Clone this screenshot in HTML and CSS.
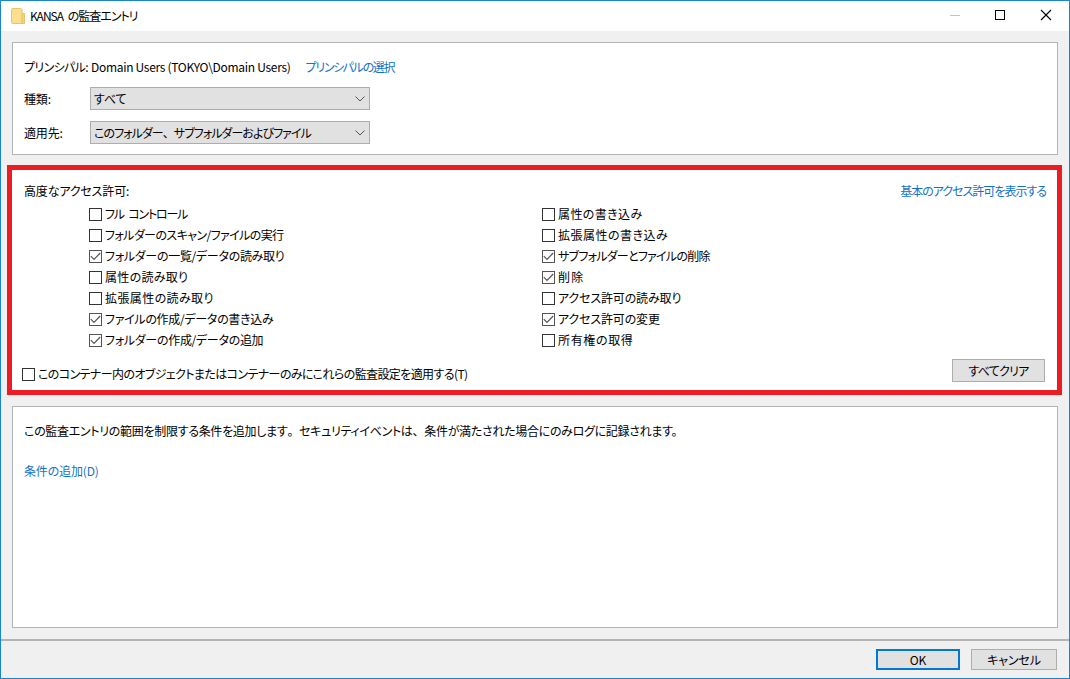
FILE: index.html
```html
<!DOCTYPE html>
<html lang="ja">
<head>
<meta charset="utf-8">
<title>KANSA の監査エントリ</title>
<link rel="stylesheet" href="styles.css">
</head>
<body>
<div class="window">
  <header class="titlebar">
    <svg class="folder" width="14" height="16" viewBox="0 0 14 16"><path d="M0.5 1.5 Q0.5 0.5 1.5 0.5 H9.5 Q11 0.5 11 2 V15.5 H1.5 Q0.5 15.5 0.5 14.5 Z" fill="#fbdf8c" stroke="#e8c468"/><path d="M11 5.5 H13.5 V15.5 H11 Z" fill="#f7d477" stroke="#e8c468"/></svg>
    <span class="title">KANSA の監査エントリ</span>
    <div class="controls">
      <svg width="46" height="30" viewBox="0 0 46 30"><path d="M19 14.5 H29" stroke="#c4c4c4"/></svg>
      <svg width="46" height="30" viewBox="0 0 46 30"><rect x="18.5" y="9.5" width="9" height="9" fill="none" stroke="#000"/></svg>
      <svg width="46" height="30" viewBox="0 0 46 30"><path d="M18 9 L28 19 M28 9 L18 19" stroke="#000" stroke-width="1.1" fill="none"/></svg>
    </div>
  </header>
  <main class="content">
    <section class="panel top">
      <div class="row principal"><span class="ls-60">プリンシパル:</span><span class="ls-30 name">Domain Users (TOKYO\Domain Users)</span><a class="link ls-130">プリンシパルの選択</a></div>
      <div class="row field"><label class="flabel">種類:</label><div class="select">すべて<svg class="chev" width="10" height="6" viewBox="0 0 10 6"><path d="M0.5 0.5 L5 5 L9.5 0.5" fill="none" stroke="#555"/></svg></div></div>
      <div class="row field"><label class="flabel">適用先:</label><div class="select"><span class="ls-95">このフォルダー<span class="fw">、</span>サブフォルダーおよびファイル</span><svg class="chev" width="10" height="6" viewBox="0 0 10 6"><path d="M0.5 0.5 L5 5 L9.5 0.5" fill="none" stroke="#555"/></svg></div></div>
    </section>
    <section class="redbox">
      <div class="panel perms">
        <div class="permhead"><span>高度なアクセス許可:</span><a class="link ls-100 basic">基本のアクセス許可を表示する</a></div>
        <div class="grid">
          <div class="col">
            <div class="check"><i class="box"></i><span class="full">フル コントロール</span></div>
            <div class="check"><i class="box"></i><span class="ls-60">フォルダーのスキャン/ファイルの実行</span></div>
            <div class="check"><i class="box on"><svg width="11" height="9" viewBox="0 0 11 9"><path d="M0.8 4.2 L4 7.4 L10.2 1" fill="none" stroke="#555" stroke-width="1.2"/></svg></i><span class="ls-30">フォルダーの一覧/データの読み取り</span></div>
            <div class="check"><i class="box"></i><span class="lsp-30">属性の読み取り</span></div>
            <div class="check"><i class="box"></i><span class="lsp-40">拡張属性の読み取り</span></div>
            <div class="check"><i class="box on"><svg width="11" height="9" viewBox="0 0 11 9"><path d="M0.8 4.2 L4 7.4 L10.2 1" fill="none" stroke="#555" stroke-width="1.2"/></svg></i><span class="ls-30">ファイルの作成/データの書き込み</span></div>
            <div class="check"><i class="box on"><svg width="11" height="9" viewBox="0 0 11 9"><path d="M0.8 4.2 L4 7.4 L10.2 1" fill="none" stroke="#555" stroke-width="1.2"/></svg></i><span class="ls-30">フォルダーの作成/データの追加</span></div>
          </div>
          <div class="col">
            <div class="check"><i class="box"></i><span class="lsp-40">属性の書き込み</span></div>
            <div class="check"><i class="box"></i><span class="lsp-50">拡張属性の書き込み</span></div>
            <div class="check"><i class="box on"><svg width="11" height="9" viewBox="0 0 11 9"><path d="M0.8 4.2 L4 7.4 L10.2 1" fill="none" stroke="#555" stroke-width="1.2"/></svg></i><span class="ls-75">サブフォルダーとファイルの削除</span></div>
            <div class="check"><i class="box on"><svg width="11" height="9" viewBox="0 0 11 9"><path d="M0.8 4.2 L4 7.4 L10.2 1" fill="none" stroke="#555" stroke-width="1.2"/></svg></i><span class="lsp-130">削除</span></div>
            <div class="check"><i class="box"></i><span>アクセス許可の読み取り</span></div>
            <div class="check"><i class="box on"><svg width="11" height="9" viewBox="0 0 11 9"><path d="M0.8 4.2 L4 7.4 L10.2 1" fill="none" stroke="#555" stroke-width="1.2"/></svg></i><span>アクセス許可の変更</span></div>
            <div class="check"><i class="box"></i><span class="lsp-65">所有権の取得</span></div>
          </div>
        </div>
        <div class="permfoot">
          <div class="check"><i class="box"></i><span class="ls-60">このコンテナー内のオブジェクトまたはコンテナーのみにこれらの監査設定を適用する(T)</span></div>
          <button class="btn clear">すべてクリア</button>
        </div>
      </div>
    </section>
    <section class="panel cond">
      <p class="desc ls-30">この監査エントリの範囲を制限する条件を追加します<span class="fw">。</span>セキュリティイベントは<span class="fw">、</span>条件が満たされた場合にのみログに記録されます。</p>
      <a class="link">条件の追加(D)</a>
    </section>
  </main>
  <footer class="footer">
    <button class="btn ok">OK</button>
    <button class="btn cancel">キャンセル</button>
  </footer>
</div>
</body>
</html>
```
FILE: styles.css
```css
* { box-sizing: border-box; }
html, body { margin: 0; padding: 0; }
body {
  font-family: "Noto Sans CJK JP", "Noto Sans", sans-serif;
  font-size: 12px;
  line-height: 16px;
  color: #000;
  font-feature-settings: "palt";
  letter-spacing: -0.15px;
}
.fw { font-feature-settings: normal; }
.ls-130 { letter-spacing: -1.3px; }
.ls-100 { letter-spacing: -1px; }
.ls-95 { letter-spacing: -0.95px; }
.ls-75 { letter-spacing: -0.75px; }
.ls-60 { letter-spacing: -0.6px; }
.ls-30 { letter-spacing: -0.3px; }
.lsp-30 { letter-spacing: 0.3px; }
.lsp-40 { letter-spacing: 0.4px; }
.lsp-50 { letter-spacing: 0.5px; }
.lsp-65 { letter-spacing: 0.65px; }
.lsp-130 { letter-spacing: 1.3px; }
.window {
  width: 1070px;
  height: 679px;
  border: 1px solid #1883d7;
  background: #f0f0f0;
  display: flex;
  flex-direction: column;
  overflow: hidden;
}
.titlebar {
  height: 30px;
  flex: none;
  background: #fff;
  display: flex;
  align-items: center;
  padding-left: 10px;
}
.folder { margin-right: 5px; }
.title { flex: 1; letter-spacing: -1px; word-spacing: 3px; }
.controls { display: flex; font-size: 0; }
.content {
  flex: 1;
  display: flex;
  flex-direction: column;
  padding: 11px;
}
.panel {
  background: #fff;
  border: 1px solid #b4b4b4;
}
.top {
  height: 113px;
  flex: none;
  padding: 15px 11px 0;
  margin-bottom: 10px;
}
.row { display: flex; align-items: center; }
.principal { height: 18px; }
.name { margin-left: 3px; margin-right: 15px; }
.link { color: #1272c9; }
.basic { margin-right: 1px; }
.field { height: 23px; margin-top: 11px; }
.flabel { width: 66px; flex: none; }
.select {
  width: 280px;
  height: 23px;
  background: #e1e1e1;
  border: 1px solid #adadad;
  display: flex;
  align-items: center;
  justify-content: space-between;
  padding: 0 4px 0 3px;
}
.redbox {
  flex: none;
  height: 230px;
  margin: 0 -4px 11px -5px;
  border: 5px solid #ed1c24;
}
.perms {
  height: 100%;
  border-width: 0;
  padding: 13px 10px 0 12px;
  display: flex;
  flex-direction: column;
}
.permhead { display: flex; justify-content: space-between; height: 16px; }
.grid { display: grid; grid-template-columns: 453px 1fr; padding-left: 65px; margin-top: 7px; }
.col { display: flex; flex-direction: column; gap: 5px; }
.check { display: flex; align-items: center; height: 16px; }
.full { letter-spacing: -1.2px; word-spacing: 3px; }
.box {
  width: 13px;
  height: 13px;
  flex: none;
  border: 1px solid #333;
  background: #fff;
  margin-right: 3px;
  display: flex;
  align-items: center;
  justify-content: center;
}
.box.on { border-color: #555; }
.permfoot { display: flex; justify-content: space-between; align-items: flex-end; margin-top: 11px; margin-left: -2px; margin-right: 2px; }
.btn {
  font: inherit;
  letter-spacing: inherit;
  font-feature-settings: inherit;
  background: #e1e1e1;
  border: 1px solid #adadad;
  color: #000;
  padding: 0;
}
.clear { width: 93px; height: 23px; letter-spacing: -0.7px; }
.cond { flex: 1; padding: 16px 11px 0; }
.desc { margin: 0 0 24px; }
.footer {
  height: 39px;
  flex: none;
  border-top: 2px solid #b4b4b4;
  display: flex;
  justify-content: flex-end;
  align-items: flex-start;
  gap: 11px;
  padding: 8px 12px 0 0;
}
.ok { width: 84px; height: 21px; border: 2px solid #0078d7; }
.cancel { width: 86px; height: 21px; }
```
